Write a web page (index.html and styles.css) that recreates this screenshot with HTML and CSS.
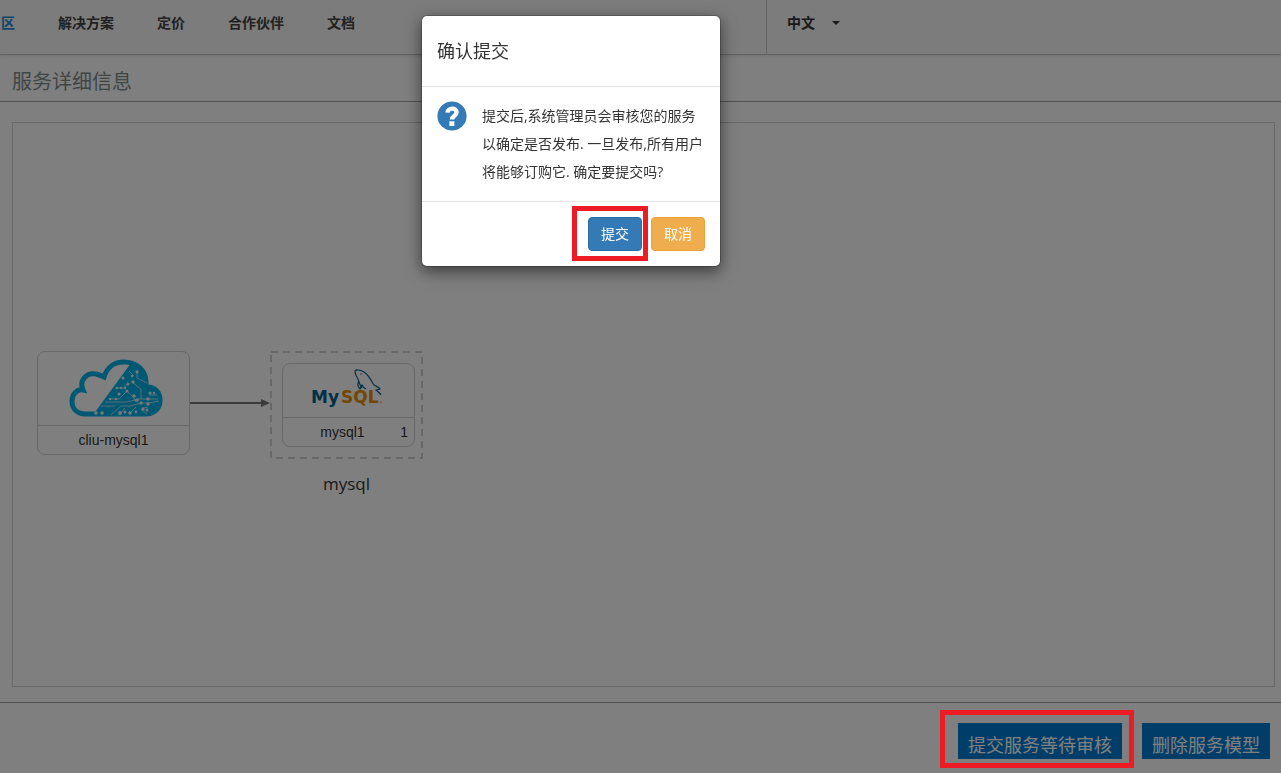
FILE: index.html
```html
<!DOCTYPE html>
<html lang="zh-CN">
<head>
<meta charset="utf-8">
<title>服务详细信息</title>
<link rel="stylesheet" href="styles.css">
</head>
<body>
<header class="topbar">
  <nav class="nav">
    <a class="nav-link nav-link-active" href="#">区</a>
    <a class="nav-link" href="#">解决方案</a>
    <a class="nav-link" href="#">定价</a>
    <a class="nav-link" href="#">合作伙伴</a>
    <a class="nav-link" href="#">文档</a>
  </nav>
  <button class="lang" type="button">中文<span class="caret"></span></button>
</header>

<main class="main">
  <h1 class="page-title">服务详细信息</h1>
  <section class="canvas">
    <svg class="edge" width="82" height="12" viewBox="0 0 82 12">
      <path d="M0 6H73" stroke="#777" stroke-width="2"/>
      <path d="M71 2L80 6L71 10Z" fill="#777"/>
    </svg>
    <div class="node node-service">
      <div class="node-icon">
        <svg width="94" height="60" viewBox="0 0 94 60">
          <path d="M17 55C8 55 3 50 3 42C3 35 8 30 14 31C10 22 17 13 27 15C31 16 33 17 35 18C38 8 46 3 55 3C68 3 77 12 77 23V28C85 27 91 33 91 41C91 50 85 55 76 55Z" fill="none" stroke="#00b0e6" stroke-width="5"/>
          <path d="M62 4C72 6 79 14 78 28C87 27 92 34 91 43C90 51 84 56 76 56H24L62 4Z" fill="#00b0e6"/>
          <g fill="none" stroke="#d8eef5" stroke-width=".8">
            <path d="M68 13V19L78 24M64 24L72 30V40M58 25L55 29H46M58 32L50 40H40M58 32L64 38L67 43M36 43H58L70 40H89M32 47H46M42 56L52 47H61L72 44M72 44L80 44L90 42M74 49L79 48M72 50L78 55M61 54L67 48M52 54L56 49M80 36H88M60 12L65 17"/>
          </g>
          <g fill="#e6f4f8">
            <circle cx="68" cy="13" r="1.7"/><circle cx="54" cy="19" r="1.6"/><circle cx="63" cy="17" r="1.3"/><circle cx="64" cy="23" r="1.7"/><circle cx="59" cy="25" r="1.5"/>
            <circle cx="48" cy="29" r="1.2"/><circle cx="52" cy="29" r="1.2"/><circle cx="56" cy="29" r="1.2"/><circle cx="58" cy="32" r="1.5"/><circle cx="50" cy="35" r="1.6"/><circle cx="65" cy="37" r="1.8"/>
            <circle cx="68" cy="41" r="1.8"/><circle cx="72" cy="44" r="1.8"/><circle cx="79" cy="40" r="1.8"/><circle cx="79" cy="45" r="1.8"/><circle cx="74" cy="50" r="1.7"/><circle cx="78" cy="51" r="1.5"/>
            <circle cx="81" cy="34" r="1.6"/><circle cx="85" cy="34" r="1.2"/><circle cx="41" cy="40" r="1.3"/><circle cx="47" cy="40" r="1.3"/><circle cx="27" cy="54" r="1.8"/><circle cx="33" cy="54" r="1.8"/>
            <circle cx="51" cy="54" r="1.9"/><circle cx="56" cy="53" r="1.5"/><circle cx="61" cy="54" r="1.8"/><circle cx="67" cy="53" r="1.4"/>
          </g>
        </svg>
      </div>
      <div class="node-label">cliu-mysql1</div>
    </div>
    <div class="group">
      <svg class="group-frame" width="153" height="108">
        <rect x="1" y="1" width="151" height="106" fill="none" stroke="#d0d0d0" stroke-width="2" stroke-dasharray="7 5"/>
      </svg>
      <div class="node node-vm">
        <div class="node-icon">
          <svg width="78" height="46" viewBox="0 0 78 46">
            <text class="logo-my" x="1" y="35">My</text>
            <text class="logo-sql" x="31" y="35">SQL</text>
            <path d="M70 34H72" stroke="#e48e00"/>
            <path d="M52 20C50 18 49 14 48 11C46 8 45 5 45 3C46 1 51 2 54 4C60 8 61 13 64 17C67 19 69 19 70 21L66 22C68 24 70 25 71 27M49 13C47 16 48 19 50 21L52 17C53 19 54 20 56 21" fill="none" stroke="#00618a" stroke-width="1.2"/>
            <circle cx="51" cy="6" r=".7" fill="#00618a"/>
          </svg>
        </div>
        <div class="node-label"><span>mysql1</span><span class="count">1</span></div>
      </div>
      <div class="group-name">mysql</div>
    </div>
  </section>
</main>

<footer class="actions">
  <span class="marked marked-action"><button class="action" type="button">提交服务等待审核</button></span>
  <button class="action" type="button">删除服务模型</button>
</footer>

<div class="backdrop"></div>
<div class="modal" role="dialog" aria-modal="true" aria-labelledby="modal-title">
  <div class="modal-header"><h2 class="modal-title" id="modal-title">确认提交</h2></div>
  <div class="modal-body">
    <svg class="question" width="30" height="30" viewBox="0 0 30 30">
      <circle cx="15" cy="15" r="14.6" fill="#337ab7"/>
      <path d="M10.4 11.6C10.8 6.4 19.6 6.4 19.6 11.3C19.6 15 15.1 14.4 15.1 18.4" fill="none" stroke="#fff" stroke-width="4.4"/>
      <rect x="12.4" y="20.3" width="5" height="4.7" fill="#fff"/>
    </svg>
    <p class="message">提交后,系统管理员会审核您的服务<br>以确定是否发布. 一旦发布,所有用户<br>将能够订购它. 确定要提交吗?</p>
  </div>
  <div class="modal-footer">
    <span class="marked marked-submit"><button class="btn btn-primary" type="button">提交</button></span>
    <button class="btn btn-warning" type="button">取消</button>
  </div>
</div>
</body>
</html>
```

FILE: styles.css
```css
* { box-sizing: border-box; }

body {
  margin: 0;
  min-height: 100vh;
  display: flex;
  flex-direction: column;
  background: #fff;
  color: #333;
  font: 14px/20px "Open Sans", "Noto Sans CJK SC", sans-serif;
}

button { font-family: inherit; cursor: pointer; }

.topbar {
  display: flex;
  background: #f8f8f8;
  border-bottom: 1px solid #c4c4c4;
  box-shadow: 0 1px 4px rgba(0, 0, 0, .12);
}

.nav {
  flex: 0 0 767px;
  display: flex;
  gap: 43px;
  padding: 13px 0 21px 1px;
  border-right: 1px solid #c8c8c8;
}

.nav-link {
  color: #444;
  font-weight: bold;
  text-decoration: none;
  white-space: nowrap;
}

.nav-link-active { color: #2a8fd0; }

.lang {
  display: flex;
  align-items: center;
  gap: 17px;
  padding: 13px 20px 21px;
  border: 0;
  background: none;
  color: #333;
  font-size: 14px;
  line-height: 20px;
  font-weight: bold;
}

.caret {
  border: 4px solid transparent;
  border-top-color: #333;
  border-bottom: 0;
}

.main { flex: 1; display: flex; flex-direction: column; }

.page-title {
  margin: 0;
  padding: 12px 12px 4px;
  border-bottom: 1px solid #a0a0a0;
  color: #7f8c8d;
  font-size: 20px;
  line-height: 30px;
  font-weight: 400;
}

.canvas {
  position: relative;
  flex: 1;
  margin: 20px 6px 15px 12px;
  border: 1px solid #d0d0d0;
}

.edge { position: absolute; left: 177px; top: 274px; }

.node {
  position: absolute;
  border: 1px solid #d0d0d0;
  border-radius: 8px;
  color: #333;
  font-family: "Liberation Sans", Arial, sans-serif;
}

.node-icon {
  display: flex;
  align-items: center;
  justify-content: center;
  border-bottom: 1px solid #d0d0d0;
}

.node-label {
  position: relative;
  line-height: 28px;
  text-align: center;
}

.node-service { left: 24px; top: 228px; width: 153px; }
.node-service .node-icon { height: 74px; padding-left: 4px; }

.group { position: absolute; left: 257px; top: 228px; width: 153px; }
.group-frame { display: block; }
.node-vm { left: 12px; top: 12px; width: 133px; }
.node-vm .node-icon { height: 54px; }
.node-vm .node-label { padding-right: 12px; }
.count { position: absolute; right: 6px; }

.group-name {
  padding-top: 12px;
  font-size: 17px;
  line-height: 26px;
  text-align: center;
}

.logo-my, .logo-sql { font: bold 17px "DejaVu Sans", sans-serif; }
.logo-my { fill: #00618a; }
.logo-sql { fill: #e48e00; }

.actions {
  display: flex;
  justify-content: flex-end;
  gap: 20px;
  padding: 20px 11px 14px;
  border-top: 1px solid #a0a0a0;
}

.action {
  display: block;
  height: 36px;
  padding: 8px 10px 0;
  border: 0;
  background: #007cd2;
  color: #fff;
  font-size: 18px;
  line-height: 28px;
  font-weight: 400;
}

.marked { position: relative; }

.marked::after {
  content: "";
  position: absolute;
  z-index: 20;
  border: 5px solid #ed1c24;
  pointer-events: none;
}

.marked-action::after { inset: -13px -12px -9px -18px; }
.marked-submit::after { inset: -11px -6px -10px -16px; }

.backdrop {
  position: fixed;
  z-index: 10;
  inset: 0;
  background: rgba(0, 0, 0, .5);
}

.modal {
  position: absolute;
  z-index: 11;
  left: 421px;
  top: 15px;
  width: 300px;
  border: 1px solid rgba(0, 0, 0, .2);
  border-radius: 6px;
  background: #fff;
  background-clip: padding-box;
  box-shadow: 0 5px 15px rgba(0, 0, 0, .5);
}

.modal-header { padding: 20px 15px; border-bottom: 1px solid #e5e5e5; }

.modal-title {
  margin: 0;
  font-size: 18px;
  line-height: 30px;
  font-weight: 400;
}

.modal-body { display: flex; gap: 15px; padding: 15px; }
.question { flex: none; margin-top: -1px; }
.message { margin: 0; line-height: 28px; white-space: nowrap; }

.modal-footer {
  display: flex;
  justify-content: flex-end;
  gap: 9px;
  padding: 15px;
  border-top: 1px solid #e5e5e5;
}

.btn {
  display: block;
  padding: 6px 12px;
  border: 1px solid;
  border-radius: 4px;
  color: #fff;
  font-size: 14px;
  line-height: 20px;
}

.btn-primary { border-color: #2e6da4; background: #337ab7; }
.btn-warning { border-color: #eea236; background: #f0ad4e; }
```
